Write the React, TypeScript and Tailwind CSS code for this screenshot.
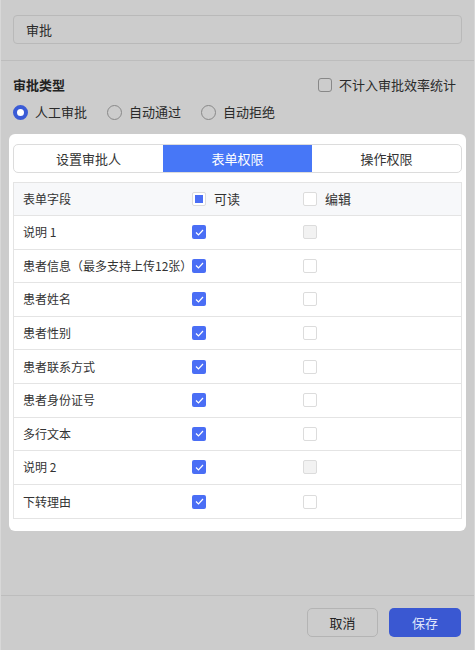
import React from 'react';

// Form field permission rows
interface FieldRow {
  name: string;
  readable: boolean;
  editDisabled: boolean;
}

const rows: FieldRow[] = [
  { name: '说明 1', readable: true, editDisabled: true },
  { name: '患者信息（最多支持上传12张）', readable: true, editDisabled: false },
  { name: '患者姓名', readable: true, editDisabled: false },
  { name: '患者性别', readable: true, editDisabled: false },
  { name: '患者联系方式', readable: true, editDisabled: false },
  { name: '患者身份证号', readable: true, editDisabled: false },
  { name: '多行文本', readable: true, editDisabled: false },
  { name: '说明 2', readable: true, editDisabled: true },
  { name: '下转理由', readable: true, editDisabled: false },
];

function Checked() {
  return (
    <span className="w-[14px] h-[14px] rounded-[2px] bg-[#4a6ef5] flex items-center justify-center">
      <svg width="9" height="7" viewBox="0 0 9 7" fill="none">
        <path d="M1 3.5L3.5 6L8 1" stroke="white" strokeWidth="1.2" />
      </svg>
    </span>
  );
}

function Empty({ disabled }: { disabled?: boolean }) {
  return (
    <span
      className={`w-[14px] h-[14px] rounded-[2px] border border-[#dcdcdc] ${
        disabled ? 'bg-[#f2f2f2]' : 'bg-white'
      }`}
    />
  );
}

export default function App() {
  return (
    <div
      className="w-[475px] h-[650px] bg-[#cccccc] border-x border-[#d8d8d8] flex flex-col text-[#333] overflow-hidden"
      style={{ fontFamily: '"Noto Sans CJK SC", "Noto Sans", sans-serif' }}
    >
      {/* Name input */}
      <div className="px-3 pt-[15px] pb-[16px] border-b border-[#bdbdbd]">
        <div className="h-[29px] rounded-[4px] border border-[#b9b9b9] flex items-center px-3 text-[13px] text-[#2a2a2a]">
          审批
        </div>
      </div>

      {/* Approval type */}
      <div className="px-3 pt-[14px]">
        <div className="flex items-center justify-between h-[20px]">
          <span className="text-[13px] font-bold text-[#222]">审批类型</span>
          <label className="flex items-center gap-[7px] text-[13px] text-[#2a2a2a] mr-[6px]">
            <span className="w-[14px] h-[14px] rounded-[3px] border border-[#888]" />
            不计入审批效率统计
          </label>
        </div>
        <div className="flex items-center gap-[20px] mt-[7px] h-[20px] text-[13px] text-[#2a2a2a]">
          <label className="flex items-center gap-[7px]">
            <span className="w-[15px] h-[15px] rounded-full border-[4px] border-[#3a5bd6] bg-white" />
            人工审批
          </label>
          <label className="flex items-center gap-[7px]">
            <span className="w-[15px] h-[15px] rounded-full border border-[#888]" />
            自动通过
          </label>
          <label className="flex items-center gap-[7px]">
            <span className="w-[15px] h-[15px] rounded-full border border-[#888]" />
            自动拒绝
          </label>
        </div>
      </div>

      {/* Highlighted card */}
      <div className="mx-2 mt-[12px] bg-white rounded-[6px] px-1 pt-[10px] pb-[12px]">
        <div className="grid grid-cols-3 h-[29px] border border-[#dcdcdc] rounded-[5px] overflow-hidden text-[13px]">
          <div className="flex items-center justify-center text-[#333]">设置审批人</div>
          <div className="flex items-center justify-center bg-[#4777f7] text-white">表单权限</div>
          <div className="flex items-center justify-center text-[#333]">操作权限</div>
        </div>

        <div className="mt-[9px] border border-[#e4e4e4] text-[12px] text-[#333]">
          <div className="grid grid-cols-[178px_111px_1fr] h-[33px] bg-[#f7f8fa] border-b border-[#e4e4e4] items-center">
            <span className="pl-[9px]">表单字段</span>
            <span className="flex items-center gap-[8px] text-[13px]">
              <span className="w-[14px] h-[14px] rounded-[2px] border border-[#dcdcdc] bg-white flex items-center justify-center">
                <span className="w-[8px] h-[8px] bg-[#4a6ef5]" />
              </span>
              可读
            </span>
            <span className="flex items-center gap-[8px] text-[13px]">
              <Empty />
              编辑
            </span>
          </div>
          {rows.map((row, i) => (
            <div
              key={row.name}
              className={`grid grid-cols-[178px_111px_1fr] h-[33.6px] items-center ${
                i < rows.length - 1 ? 'border-b border-[#e4e4e4]' : ''
              }`}
            >
              <span className="pl-[9px] whitespace-nowrap">{row.name}</span>
              <span className="flex">{row.readable ? <Checked /> : <Empty />}</span>
              <span className="flex">
                <Empty disabled={row.editDisabled} />
              </span>
            </div>
          ))}
        </div>
      </div>

      {/* Footer */}
      <div className="mt-auto border-t border-[#bdbdbd] h-[55px] flex items-center justify-end gap-[11px] px-[13px] pb-[1px]">
        <button className="w-[71px] h-[29px] rounded-[5px] border border-[#b4b4b4] text-[13px] text-[#222]">
          取消
        </button>
        <button className="w-[72px] h-[29px] rounded-[5px] bg-[#3a58d2] text-[13px] text-[#dfe5fb]">
          保存
        </button>
      </div>
    </div>
  );
}
